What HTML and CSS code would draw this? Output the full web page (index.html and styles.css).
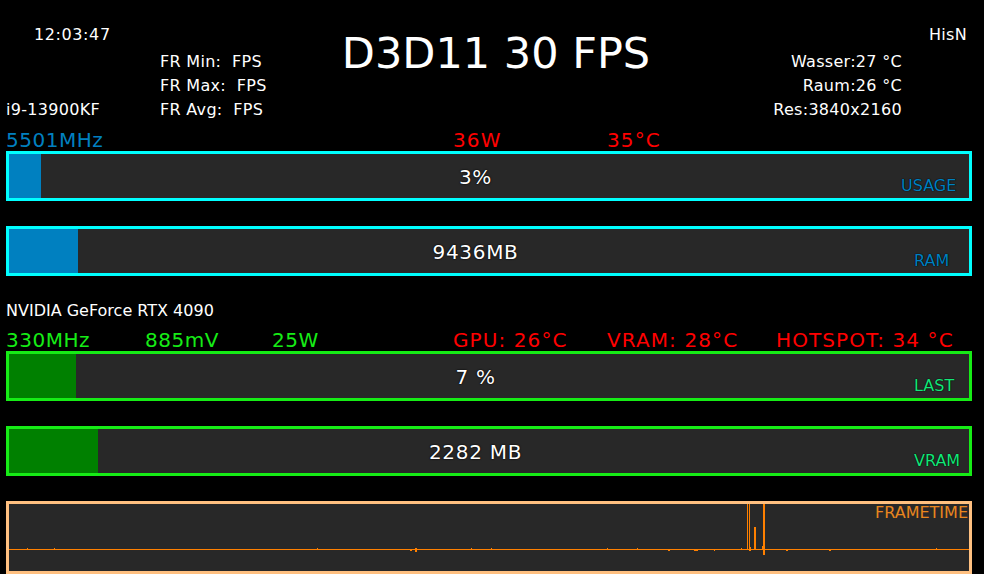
FILE: index.html
```html
<!DOCTYPE html>
<html lang="de">
<head>
  <meta charset="UTF-8" />
  <meta name="viewport" content="width=device-width, initial-scale=1.0" />
  <title>OSD Overlay</title>
  <link rel="stylesheet" href="styles.css">
</head>
<body>
  <div class="header">
    <div class="clock">12:03:47</div>
    <div class="cpu-name">i9-13900KF</div>
    <div class="fr-list">
      <div class="fr">FR Min:  FPS</div>
      <div class="fr">FR Max:  FPS</div>
      <div class="fr">FR Avg:  FPS</div>
    </div>
    <div class="title">D3D11 30 FPS</div>
    <div class="env-list">
      <div>Wasser:27 °C</div>
      <div>Raum:26 °C</div>
      <div>Res:3840x2160</div>
    </div>
    <div class="user">HisN</div>
  </div>

  <!-- CPU -->
  <div class="stats stats-cpu">
    <span class="blue col-1">5501MHz</span>
    <span class="red col-4">36W</span>
    <span class="red col-5">35°C</span>
  </div>
  <div class="bar bar-cpu">
    <div class="fill fill-cpu" style="width: 32px"></div>
    <span class="value">3%</span>
    <span class="tag tag-cpu tag-usage">USAGE</span>
  </div>
  <div class="bar bar-cpu bar-next">
    <div class="fill fill-cpu" style="width: 69px"></div>
    <span class="value">9436MB</span>
    <span class="tag tag-cpu">RAM</span>
  </div>

  <!-- GPU -->
  <div class="gpu-name">NVIDIA GeForce RTX 4090</div>
  <div class="stats stats-gpu">
    <span class="green">330MHz</span>
    <span class="green">885mV</span>
    <span class="green">25W</span>
    <span class="red">GPU: 26°C</span>
    <span class="red">VRAM: 28°C</span>
    <span class="red">HOTSPOT: 34 °C</span>
  </div>
  <div class="bar bar-gpu">
    <div class="fill fill-gpu" style="width: 67px"></div>
    <span class="value">7 %</span>
    <span class="tag tag-gpu">LAST</span>
  </div>
  <div class="bar bar-gpu bar-next">
    <div class="fill fill-gpu" style="width: 89px"></div>
    <span class="value">2282 MB</span>
    <span class="tag tag-gpu">VRAM</span>
  </div>

  <!-- Frametime graph -->
  <div class="frametime">
    <svg class="graph" width="960" height="67" viewBox="0 0 960 67">
      <g fill="#ff8000">
        <rect x="0" y="45" width="960" height="1" />
        <!-- small bumps -->
        <rect x="18" y="44" width="1" height="1" />
        <rect x="45" y="44" width="1" height="1" />
        <rect x="308" y="44" width="1" height="1" />
        <rect x="462" y="44" width="1" height="1" />
        <rect x="482" y="44" width="1" height="1" />
        <rect x="598" y="44" width="1" height="1" />
        <rect x="628" y="44" width="1" height="1" />
        <rect x="732" y="44" width="1" height="1" />
        <rect x="927" y="44" width="1" height="1" />
        <!-- small dips -->
        <rect x="401" y="46" width="2" height="1" />
        <rect x="406" y="44" width="2" height="4" />
        <rect x="659" y="46" width="2" height="1" />
        <rect x="685" y="46" width="4" height="1" />
        <rect x="705" y="45" width="1" height="2" />
        <rect x="777" y="46" width="2" height="1" />
        <rect x="820" y="45" width="2" height="2" />
        <!-- spikes -->
        <rect x="738" y="0" width="1" height="45" />
        <rect x="740" y="0" width="1" height="45" />
        <rect x="740" y="43" width="2" height="4" />
        <rect x="745" y="23" width="2" height="23" />
        <rect x="753" y="42" width="1" height="4" />
        <rect x="754" y="0" width="2" height="51" />
      </g>
    </svg>
    <span class="graph-tag">FRAMETIME</span>
  </div>
</body>
</html>
```

FILE: styles.css
```css
body {
  margin: 0;
  width: 984px;
  height: 574px;
  overflow: hidden;
  background: #000;
  color: #fff;
  font-family: "DejaVu Sans", Verdana, sans-serif;
  font-size: 16px;
}

/* header */

.header {
  display: grid;
  grid-template-columns: 160px 180px 312px 250px 1fr;
  grid-template-rows: 27px 24px 24px 24px;
  padding-top: 23px;
  line-height: 24px;
  letter-spacing: 0.3px;
}

.clock {
  grid-column: 1;
  grid-row: 1;
  padding-left: 34px;
  letter-spacing: 0.6px;
}

.cpu-name {
  grid-column: 1;
  grid-row: 4;
  padding-left: 6px;
}

.fr-list {
  grid-column: 2;
  grid-row: 2 / 5;
}

.fr {
  white-space: pre;
}

.title {
  grid-column: 3;
  grid-row: 1 / 5;
  margin-top: 5px;
  text-align: center;
  font-size: 43px;
  line-height: 50px;
  letter-spacing: 0;
}

.env-list {
  grid-column: 4;
  grid-row: 2 / 5;
  text-align: right;
}

.user {
  grid-column: 5;
  grid-row: 1;
  padding-left: 27px;
}

/* stat rows */

.stats {
  display: grid;
  grid-template-columns: 139px 127px 181px 154px 169px 1fr;
  padding-left: 6px;
  font-size: 20px;
  line-height: 20px;
  margin-bottom: 1px;
  letter-spacing: 0.5px;
}

.stats-cpu {
  margin-top: 8px;
}

.stats-gpu {
  margin-top: 7px;
}

.col-1 { grid-column: 1; }
.col-4 { grid-column: 4; }
.col-5 { grid-column: 5; }

.blue { color: #0080c0; }
.red { color: #ff0000; letter-spacing: 1.1px; }
.green { color: #16ec16; }

.gpu-name {
  margin-top: 23px;
  padding-left: 6px;
  line-height: 24px;
}

/* bars */

.bar {
  position: relative;
  display: flex;
  align-items: center;
  justify-content: center;
  width: 960px;
  height: 44px;
  margin-left: 6px;
  border: 3px solid;
  background: #282828;
}

.bar-next {
  margin-top: 25px;
}

.bar-cpu { border-color: #00ffff; }
.bar-gpu { border-color: #16ec16; }

.fill {
  position: absolute;
  left: 0;
  top: 0;
  bottom: 0;
}

.fill-cpu { background: #0080c0; }
.fill-gpu { background: #008000; }

.value {
  position: relative;
  margin-top: 2px;
  padding-right: 27px;
  font-size: 20px;
  line-height: 24px;
  letter-spacing: 0.7px;
  text-shadow: 0 0 2px #000, 0 0 1px #000;
}

.tag {
  position: absolute;
  left: 905px;
  bottom: 4px;
  line-height: 16px;
  text-shadow: 0 0 1px #000, 0 0 1px #000;
}

.tag-usage { left: 892px; }
.tag-cpu { color: #0080c0; }
.tag-gpu { color: #14e678; }

/* frametime */

.frametime {
  position: relative;
  width: 960px;
  height: 67px;
  margin: 25px 0 0 6px;
  border: 3px solid #ffc080;
  background: #282828;
}

.graph {
  display: block;
}

.graph-tag {
  position: absolute;
  top: 1px;
  right: 1px;
  line-height: 16px;
  color: #e8861e;
}
```
